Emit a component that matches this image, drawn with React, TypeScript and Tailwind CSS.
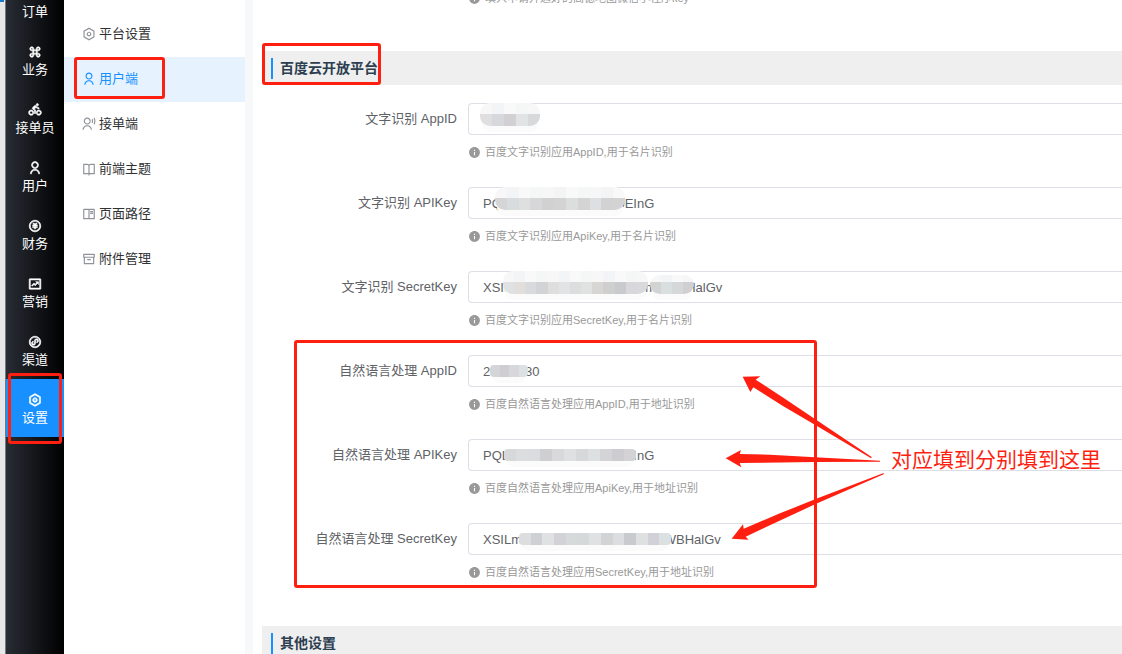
import { useId } from "react";
import type { IconType } from "react-icons";
import {
  RiArchiveLine,
  RiBookOpenLine,
  RiBookReadLine,
  RiCommandLine,
  RiCouponLine,
  RiFundsBoxLine,
  RiInformationFill,
  RiMiniProgramLine,
  RiMoneyCnyCircleLine,
  RiRidingLine,
  RiSettingsLine,
  RiUserLine,
  RiUserVoiceLine,
} from "react-icons/ri";

interface NavItem {
  label: string;
  icon: IconType;
  active?: boolean;
}

interface MaskShape {
  x: number;
  y: number;
  width: number;
  // height of the pale row above the dark one
  pale: number;
  cells: string[];
}

interface Field {
  id: string;
  label: string;
  value: string;
  help: string;
  masks: MaskShape[];
}

const mainNav: NavItem[] = [
  { label: "订单", icon: RiCouponLine },
  { label: "业务", icon: RiCommandLine },
  { label: "接单员", icon: RiRidingLine },
  { label: "用户", icon: RiUserLine },
  { label: "财务", icon: RiMoneyCnyCircleLine },
  { label: "营销", icon: RiFundsBoxLine },
  { label: "渠道", icon: RiMiniProgramLine },
  { label: "设置", icon: RiSettingsLine, active: true },
];

const subNav: NavItem[] = [
  { label: "平台设置", icon: RiSettingsLine },
  { label: "用户端", icon: RiUserLine, active: true },
  { label: "接单端", icon: RiUserVoiceLine },
  { label: "前端主题", icon: RiBookOpenLine },
  { label: "页面路径", icon: RiBookReadLine },
  { label: "附件管理", icon: RiArchiveLine },
];

const fields: Field[] = [
  {
    id: "ocr-app-id",
    label: "文字识别 AppID",
    value: "",
    help: "百度文字识别应用AppID,用于名片识别",
    masks: [
      { x: 12, y: 0, width: 60, pale: 11, cells: ["#e0dedf", "#d6d8dc", "#d2d0d2", "#e1e3e5", "#d7d9db"] },
    ],
  },
  {
    id: "ocr-api-key",
    label: "文字识别 APIKey",
    value: "PQL0000000000000000EInG",
    help: "百度文字识别应用ApiKey,用于名片识别",
    masks: [
      {
        x: 27,
        y: 0,
        width: 130,
        pale: 11,
        cells: ["#d5d5d6", "#d9dcde", "#dedfdf", "#d7d7d9", "#d1d1d2", "#d3d3d3", "#dcdddd", "#d4d4d5", "#dedfe2", "#d2d2d3", "#d3d3d3"],
      },
    ],
  },
  {
    id: "ocr-secret-key",
    label: "文字识别 SecretKey",
    value: "XSIL000000000000000000mB000fHalGv",
    help: "百度文字识别应用SecretKey,用于名片识别",
    masks: [
      {
        x: 35,
        y: 0,
        width: 145,
        pale: 11,
        cells: ["#dfe1e2", "#e1dedc", "#d9dadd", "#d3d3d5", "#dededf", "#e2e3e4", "#dcdddf", "#e0e1e1", "#d7d6d5", "#d0cfcf", "#c9cacd", "#d8d8dc", "#d9d9db"],
      },
      { x: 182, y: 4, width: 44, pale: 7, cells: ["#d2d3d3", "#d9dedf", "#d5d8d8", "#d0cfd1"] },
    ],
  },
  {
    id: "nlp-app-id",
    label: "自然语言处理 AppID",
    value: "20cc0030",
    help: "百度自然语言处理应用AppID,用于地址识别",
    masks: [{ x: 22, y: 10, width: 38, pale: 0, cells: ["#d4d5d9", "#d0cdd0", "#d8d8dc", "#dce1e2"] }],
  },
  {
    id: "nlp-api-key",
    label: "自然语言处理 APIKey",
    value: "PQL0000000000000000EInG",
    help: "百度自然语言处理应用ApiKey,用于地址识别",
    masks: [
      {
        x: 36,
        y: 10,
        width: 132,
        pale: 0,
        cells: ["#d6d8da", "#dadedf", "#dadcdf", "#cfcfd1", "#d9d9dc", "#dee0e2", "#d7d8da", "#dce0e1", "#d4d4d7", "#cdcdd1", "#d3d3d6"],
      },
    ],
  },
  {
    id: "nlp-secret-key",
    label: "自然语言处理 SecretKey",
    value: "XSILm000000000000000000r0WBHalGv",
    help: "百度自然语言处理应用SecretKey,用于地址识别",
    masks: [
      {
        x: 51,
        y: 10,
        width: 152,
        pale: 0,
        cells: ["#dcddde", "#cfd0d4", "#dfe1e3", "#d3d3d7", "#d7dadb", "#d6d9da", "#dfe1e2", "#d2d3d4", "#dbdee0", "#c9c9d0", "#dfe0e2", "#d2d1d9", "#dbe1e2"],
      },
    ],
  },
];

const paleCells = ["#f7f7f8", "#f3f4f5", "#f9f9f9", "#f5f7f7"];

function Mask({ shape }: { shape: MaskShape }) {
  const clipId = useId();
  const { x, y, width, pale, cells } = shape;
  const height = pale + 12;
  const cellWidth = width / cells.length;

  return (
    <g>
      <clipPath id={clipId}>
        <rect x={x} y={y} width={width} height={height} rx={pale ? 10 : 4} />
      </clipPath>
      <rect x={x + 2} y={y + height - 10} width={width - 4} height={16} rx={8} fill="#fbfbfb" />
      <g clipPath={`url(#${clipId})`} shapeRendering="crispEdges">
        {cells.map((color, i) => (
          <g key={i}>
            <rect x={x + i * cellWidth} y={y} width={cellWidth + 1} height={pale} fill={paleCells[i % 4]} />
            <rect x={x + i * cellWidth} y={y + pale} width={cellWidth + 1} height={12} fill={color} />
          </g>
        ))}
      </g>
    </g>
  );
}

function HelpText({ children }: { children: string }) {
  return (
    <p className="flex h-4 items-center gap-1 text-[11px] leading-4 text-[#999]">
      <RiInformationFill className="size-[13px] shrink-0" />
      {children}
    </p>
  );
}

function FormRow({ field }: { field: Field }) {
  return (
    <div className="flex h-[84px] items-start">
      <label
        htmlFor={field.id}
        className="w-[195px] shrink-0 pt-px text-right text-[13px] leading-[30px] text-[#606266]"
      >
        {field.label}
      </label>
      <div className="ml-[11px] min-w-0 flex-1">
        <div className="relative">
          <input
            id={field.id}
            type="text"
            defaultValue={field.value}
            className="block h-8 w-full rounded-l border border-r-0 border-[#dcdfe6] bg-white px-[14px] text-[13px] text-[#606266] outline-none"
          />
          <svg className="pointer-events-none absolute top-0 left-0 h-8 w-64" aria-hidden="true">
            {field.masks.map((shape) => (
              <Mask key={shape.x} shape={shape} />
            ))}
          </svg>
        </div>
        <div className="mt-[9px]">
          <HelpText>{field.help}</HelpText>
        </div>
      </div>
    </div>
  );
}

function SectionTitle({ children }: { children: string }) {
  return (
    <div className="flex h-[34px] items-center bg-[#efefef] pl-[9px]">
      <h2 className="border-l-2 border-[#1890ff] pl-[7px] text-sm leading-[21px] font-bold text-[#2c3e50]">
        {children}
      </h2>
    </div>
  );
}

function Sidebar() {
  return (
    <nav className="w-[59px] shrink-0 overflow-hidden border-l border-[#77787a] bg-linear-to-r/srgb from-[#282c34] to-black">
      <ul className="-mt-[27px]">
        {mainNav.map(({ label, icon: Icon, active }) => (
          <li key={label}>
            <a
              href="#"
              className={`flex h-[58px] flex-col items-center justify-center pt-1 text-[13px] leading-[18px] text-white ${
                active ? "bg-[#1890ff]" : ""
              }`}
            >
              <Icon className="mb-0.5 size-[14px] stroke-1" />
              {label}
            </a>
          </li>
        ))}
      </ul>
    </nav>
  );
}

function SubMenu() {
  return (
    <nav className="w-[181px] shrink-0 bg-white pt-3">
      {subNav.map(({ label, icon: Icon, active }) => (
        <a
          key={label}
          href="#"
          className={`flex h-[45px] items-center gap-[3px] pb-0.5 pl-[18px] text-[13px] ${
            active ? "bg-[#e6f3ff] text-[#1890ff]" : "text-[#303133]"
          }`}
        >
          <Icon className={`size-[14px] ${active ? "" : "text-[#909399]"}`} />
          {label}
        </a>
      ))}
    </nav>
  );
}

// Red frames, arrows and the note drawn over the form
function Annotations() {
  return (
    <div className="pointer-events-none absolute inset-0 text-[#ff1f10]">
      <div className="absolute top-[373px] left-2 h-[71px] w-[54px] rounded-[3px] border-3 border-current" />
      <div className="absolute top-[57px] left-[74px] h-[42px] w-[91px] rounded-[3px] border-3 border-current" />
      <div className="absolute top-[43px] left-[262px] h-[42px] w-[119px] rounded-[3px] border-3 border-current" />
      <div className="absolute top-[340px] left-[294px] h-[248px] w-[523px] rounded-[3px] border-3 border-current" />
      <svg
        viewBox="0 0 600 600"
        className="absolute top-[350px] left-[700px] size-[200px]"
        fill="currentColor"
        aria-hidden="true"
      >
        <path d="M128 80L181 79L167 89L250 143L346 208L516 322L512 324L346 225L250 169L160 112L151 126Z" />
        <path d="M77 325L123 300L119 312L210 314L345 322L540 332V335L345 336L119 339L124 352Z" />
        <path d="M95 566L129 523L131 536L240 490L345 448L551 369V373L345 463L200 530L137 560L146 569Z" />
      </svg>
      <p className="absolute top-[445px] left-[891px] text-[21px] leading-[30px] whitespace-nowrap">
        对应填到分别填到这里
      </p>
    </div>
  );
}

export default function App() {
  return (
    <div className="relative flex h-screen overflow-hidden bg-white font-['Liberation_Sans','Noto_Sans_CJK_SC',sans-serif]">
      <div className="w-[5px] shrink-0 bg-[#e6e7e9]">
        <div className="h-0.5 w-1 bg-[#1979ca]" />
      </div>
      <Sidebar />
      <SubMenu />
      <main className="min-w-0 flex-1 border-l-8 border-[#f6f8f9] pl-[9px]">
        <div className="-mt-[10px] mb-[45px] pl-[206px]">
          <HelpText>填入申请开通好的高德地图微信小程序key</HelpText>
        </div>
        <SectionTitle>百度云开放平台</SectionTitle>
        <form className="mt-[18px] mb-[19px]">
          {fields.map((field) => (
            <FormRow key={field.id} field={field} />
          ))}
        </form>
        <SectionTitle>其他设置</SectionTitle>
      </main>
      <Annotations />
    </div>
  );
}
